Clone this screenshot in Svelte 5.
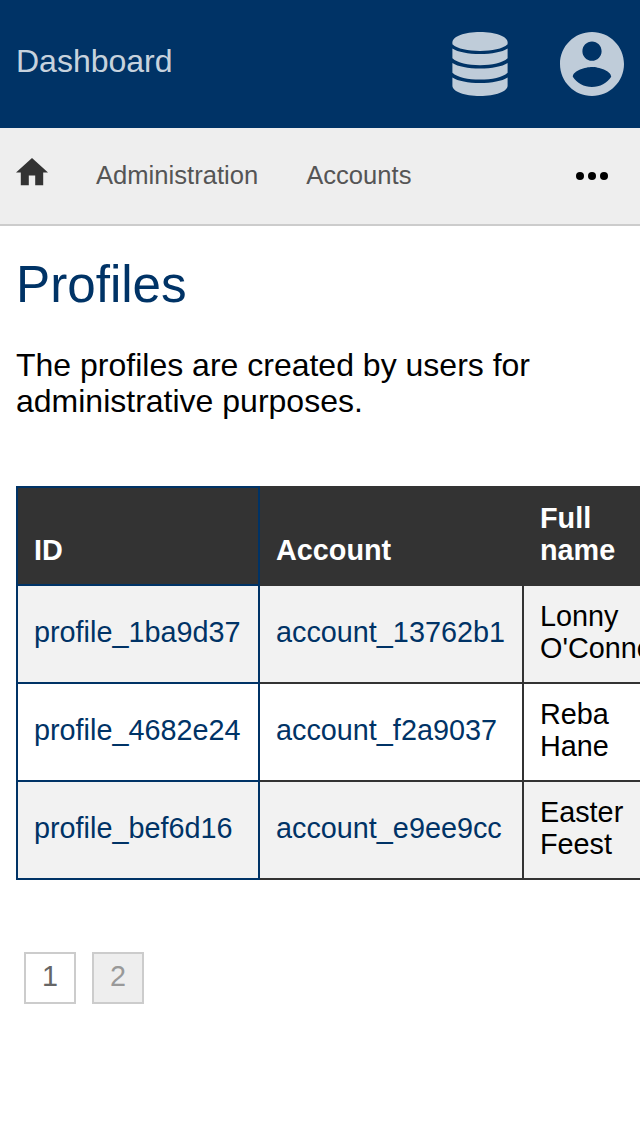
<script>
  const profiles = [
    { id: 'profile_1ba9d37', account: 'account_13762b1', name: "Lonny O'Conner" },
    { id: 'profile_4682e24', account: 'account_f2a9037', name: 'Reba Hane' },
    { id: 'profile_bef6d16', account: 'account_e9ee9cc', name: 'Easter Feest' }
  ];
</script>

<div class="page">
  <header>
    <span class="brand">Dashboard</span>
    <div class="actions">
      <svg width="56" height="64" viewBox="0 0 56 64" aria-hidden="true">
        <path d="M28 0C43.500 0 55.600 4.500 55.600 10.300V12.300C50.500 17 40 19 28 19S5.500 17 .4 12.300V10.300C.4 4.500 12.500 0 28 0Z" />
        <path d="M.4 16.400C6 20 16 21.900 28 21.900S50 20 55.600 16.400V26.300C50.500 31 40 33.200 28 33.200S5.500 31 .4 26.300Z" />
        <path d="M.4 30.900C6 34.500 16 36.400 28 36.400S50 34.500 55.600 30.900V40.800C50.500 45.500 40 47.600 28 47.600S5.500 45.500 .4 40.800Z" />
        <path d="M.4 45.400C6 49 16 50.900 28 50.900S50 49 55.600 45.400V53.700C55.600 59.500 43.500 64 28 64S.4 59.500 .4 53.700Z" />
      </svg>
      <svg width="64" height="64" viewBox="2 2 20 20" aria-hidden="true">
        <path d="M12 2C6.480 2 2 6.480 2 12s4.480 10 10 10 10-4.480 10-10S17.520 2 12 2zm0 3c1.660 0 3 1.340 3 3s-1.340 3-3 3-3-1.340-3-3 1.340-3 3-3zm0 14.200c-2.500 0-4.710-1.280-6-3.220.03-1.990 4-3.080 6-3.080 1.990 0 5.970 1.090 6 3.080-1.290 1.940-3.500 3.220-6 3.220z" />
      </svg>
    </div>
  </header>

  <nav>
    <svg class="home" width="32" height="28" viewBox="2 3 20 17.5" aria-hidden="true">
      <path d="M10 20v-6h4v6h5v-8h3L12 3 2 12h3v8z" />
    </svg>
    <span>Administration</span>
    <span>Accounts</span>
    <svg class="more" width="32" height="8" viewBox="0 0 32 8" aria-hidden="true">
      <circle cx="4" cy="4" r="4" /><circle cx="16" cy="4" r="4" /><circle cx="28" cy="4" r="4" />
    </svg>
  </nav>

  <main>
    <h1>Profiles</h1>
    <p>The profiles are created by users for administrative purposes.</p>
    <table>
      <colgroup><col class="c1" /><col class="c2" /><col class="c3" /></colgroup>
      <thead>
        <tr><th class="key">ID</th><th>Account</th><th>Full<br />name</th></tr>
      </thead>
      <tbody>
        {#each profiles as profile}
          <tr>
            <td class="key link">{profile.id}</td>
            <td class="link">{profile.account}</td>
            <td>{profile.name}</td>
          </tr>
        {/each}
      </tbody>
    </table>
    <div class="pager">
      <span>1</span>
      <span class="off">2</span>
    </div>
  </main>
</div>

<style>
  :global(body) {
    background: #fff;
  }
  .page {
    height: 1136px;
    overflow: hidden;
    font: 32px/36px "Liberation Sans", Arial, sans-serif;
    color: #000;
  }
  header {
    display: flex;
    justify-content: space-between;
    align-items: center;
    height: 128px;
    padding: 0 16px;
    box-sizing: border-box;
    background: #003366;
  }
  .brand {
    color: rgba(255, 255, 255, 0.8);
    padding-bottom: 6px;
  }
  .actions {
    display: flex;
    gap: 52px;
  }
  .actions svg {
    fill: #bfccd9;
  }
  svg {
    display: block;
  }
  nav {
    display: flex;
    align-items: center;
    gap: 48px;
    height: 98px;
    padding: 0 32px 0 16px;
    box-sizing: border-box;
    border-bottom: 2px solid #ccc;
    background: #eee;
    font-size: 25.6px;
    color: #555;
  }
  nav span {
    padding-bottom: 2px;
  }
  .home {
    fill: #333;
    margin-bottom: 8px;
  }
  .more {
    margin-left: auto;
  }
  main {
    padding: 0 16px;
  }
  h1 {
    margin: 29px 0 32px;
    font-size: 51.2px;
    line-height: 60px;
    font-weight: 400;
    color: #003366;
  }
  p {
    margin: 0 0 67px;
  }
  table {
    table-layout: fixed;
    width: 724px;
    border-collapse: collapse;
    font-size: 28.8px;
    line-height: 32px;
  }
  .c1 {
    width: 242px;
  }
  .c2 {
    width: 264px;
  }
  th,
  td {
    box-sizing: border-box;
    border: 2px solid #333;
    padding: 14px 16px 18px;
    text-align: left;
  }
  th {
    background: #333;
    color: #fff;
    vertical-align: bottom;
  }
  td:last-child {
    padding-right: 60px;
  }
  tbody tr:nth-child(odd) {
    background: #f2f2f2;
  }
  th.key,
  td.key {
    border-color: #003366;
  }
  .link {
    color: #003366;
  }
  .pager {
    display: flex;
    gap: 16px;
    margin: 72px 8px 0;
    font-size: 28.8px;
  }
  .pager span {
    width: 52px;
    height: 52px;
    box-sizing: border-box;
    border: 2px solid #ccc;
    line-height: 44px;
    text-align: center;
    color: #666;
  }
  .pager .off {
    background: #eee;
    color: #999;
  }
</style>
